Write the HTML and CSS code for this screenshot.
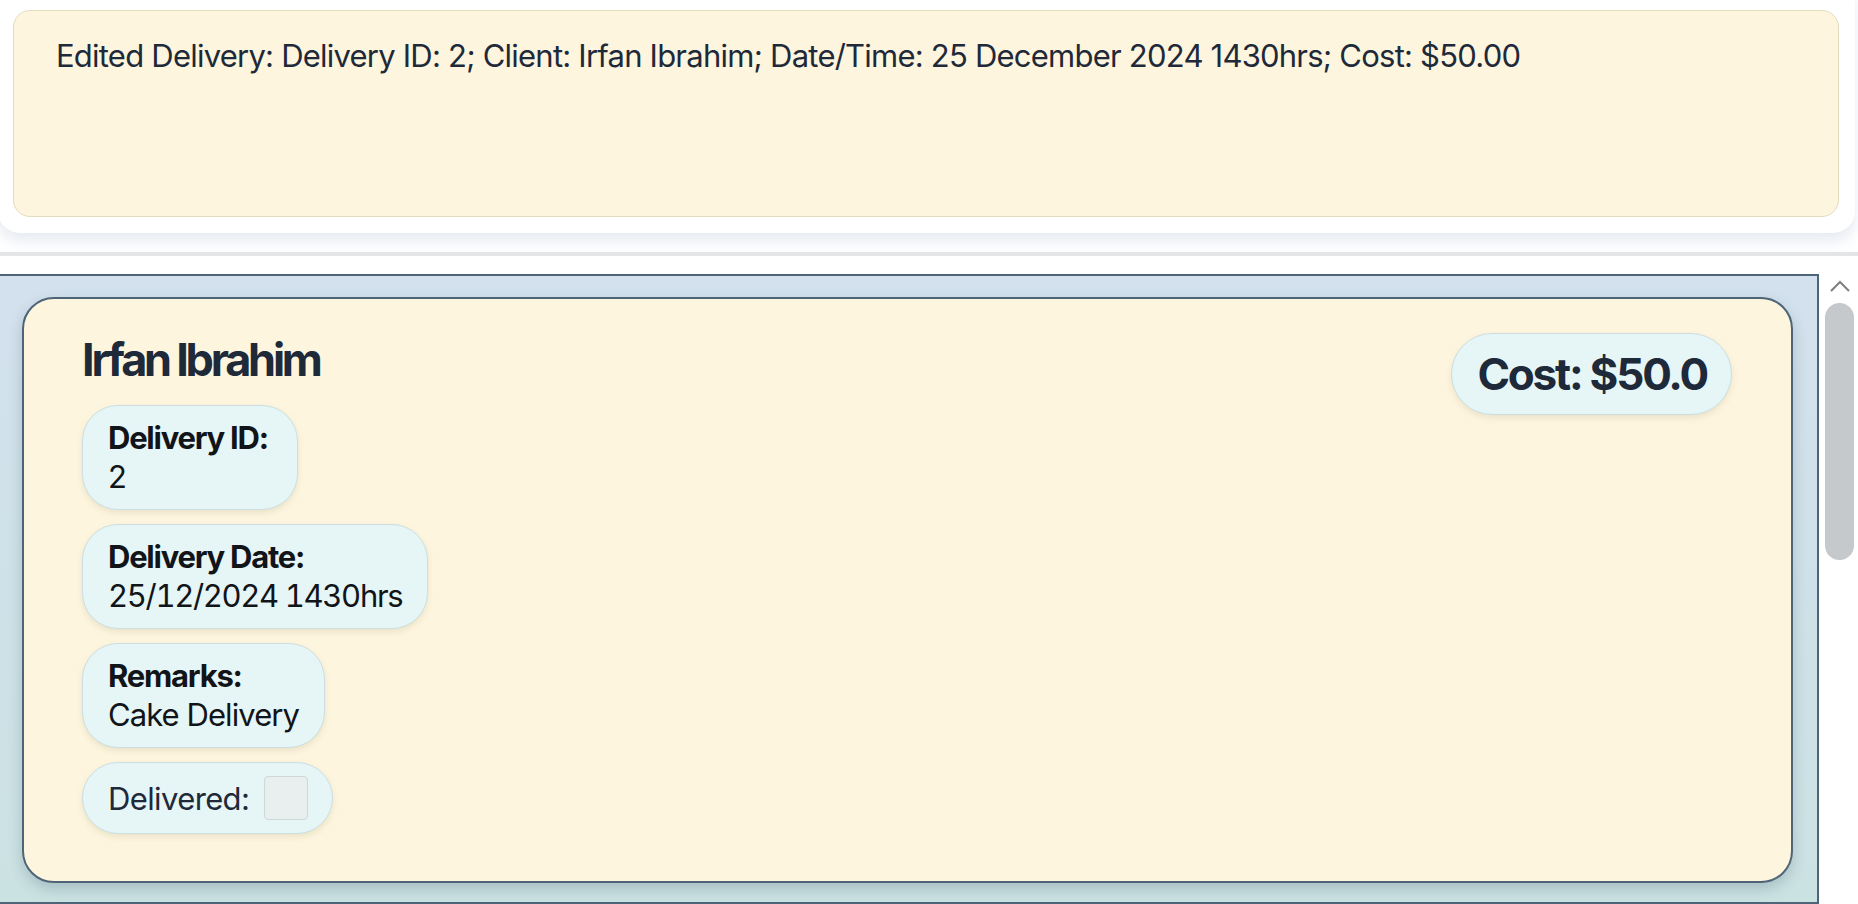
FILE: index.html
```html
<!DOCTYPE html>
<html>
<head>
<meta charset="utf-8">
<link rel="stylesheet" href="styles.css">
</head>
<body>
<div class="app">
  <div class="result-panel">
    <div class="result-box">Edited Delivery: Delivery ID: 2; Client: Irfan Ibrahim; Date/Time: 25 December 2024 1430hrs; Cost: $50.00</div>
  </div>
  <div class="divider"></div>
  <div class="list-area">
    <div class="list">
      <div class="card">
        <div class="card-main">
          <div class="name">Irfan Ibrahim</div>
          <div class="pill pill-id">
            <div class="label">Delivery ID:</div>
            <div class="value">2</div>
          </div>
          <div class="pill">
            <div class="label">Delivery Date:</div>
            <div class="value value-date">25/12/2024 1430hrs</div>
          </div>
          <div class="pill">
            <div class="label">Remarks:</div>
            <div class="value">Cake Delivery</div>
          </div>
          <div class="pill pill-check">
            <span class="check-label">Delivered:</span>
            <span class="checkbox"></span>
          </div>
        </div>
        <div class="cost">Cost: $50.0</div>
      </div>
    </div>
    <div class="scrollbar">
      <svg class="arrow" width="22" height="12" viewBox="0 0 22 12"><path d="M2 11 L11 2 L20 11" fill="none" stroke="#7d7f82" stroke-width="2"/></svg>
      <div class="thumb"></div>
    </div>
  </div>
</div>
</body>
</html>
```

FILE: styles.css
```css
html, body {
  margin: 0;
  padding: 0;
  background: #ffffff;
  width: 1858px;
  height: 904px;
  overflow: hidden;
  font-family: "Inter", "Noto Sans", sans-serif;
}

.app {
  display: flex;
  flex-direction: column;
  width: 1858px;
  height: 904px;
}

.result-panel {
  margin-top: -20px;
  margin-left: -2px;
  width: 1857px;
  height: 253px;
  box-sizing: border-box;
  padding: 30px 16px 16px 15px;
  background: #ffffff;
  border-radius: 22px;
  box-shadow: 0 8px 14px rgba(140, 160, 190, 0.22);
  flex: none;
}

.result-box {
  height: 100%;
  box-sizing: border-box;
  background: #fdf5de;
  border: 1.5px solid #e5dbbf;
  border-radius: 17px;
  padding: 25px 42px;
  color: #1e2939;
  font-size: 31px;
  letter-spacing: -0.025em;
  line-height: 40px;
}

.divider {
  flex: none;
  margin-top: 19px;
  height: 4px;
  background: #e3e5e7;
}

.list-area {
  flex: none;
  margin-top: 18px;
  height: 630px;
  display: flex;
}

.list {
  margin-left: -2px;
  width: 1821px;
  height: 630px;
  box-sizing: border-box;
  border: 2px solid #4e6477;
  background: linear-gradient(180deg, #d3e1ee 0%, #cfe1e8 50%, #cbe2e3 100%);
  padding: 21px 24px 19px 22px;
  display: flex;
}

.card {
  flex: 1;
  display: flex;
  justify-content: space-between;
  align-items: flex-start;
  background: #fdf5de;
  border: 2px solid #4e6477;
  border-radius: 32px;
  box-shadow: 0 6px 14px rgba(40, 70, 80, 0.22);
  padding: 34px 59px 0 58px;
}

.card-main {
  display: flex;
  flex-direction: column;
  align-items: flex-start;
  gap: 14px;
}

.name {
  font-weight: 700;
  font-size: 45px;
  line-height: 54px;
  letter-spacing: -0.072em;
  color: #1e2939;
  margin-bottom: 4px;
}

.pill {
  background: #e6f5f5;
  border: 1.5px solid #cbdfe2;
  border-radius: 36px;
  box-shadow: 0 3px 6px rgba(150, 150, 110, 0.18);
  padding: 12px 25px 13px 25px;
  color: #111418;
  font-size: 31px;
  line-height: 39px;
}

.pill-id {
  padding-right: 29px;
}

.label {
  font-weight: 700;
  letter-spacing: -0.04em;
}

.value {
  letter-spacing: -0.03em;
}

.value-date {
  font-variant-numeric: tabular-nums;
  letter-spacing: -0.043em;
}

.pill-check {
  display: flex;
  align-items: center;
  gap: 15px;
  padding: 13px 24px 13px 25px;
}

.check-label {
  color: #1e2939;
  letter-spacing: -0.02em;
}

.checkbox {
  width: 42px;
  height: 42px;
  background: #e9efef;
  border: 1px solid #cfd8d8;
  border-radius: 4px;
}

.cost {
  background: #e6f5f5;
  border: 1.5px solid #cbdfe2;
  border-radius: 42px;
  box-shadow: 0 3px 6px rgba(150, 150, 110, 0.18);
  padding: 14px 24px 14px 25px;
  font-weight: 700;
  font-size: 44px;
  line-height: 52px;
  letter-spacing: -0.05em;
  color: #1e2939;
}

.scrollbar {
  flex: 1;
  display: flex;
  flex-direction: column;
  align-items: center;
  padding-top: 6px;
}

.arrow {
  display: block;
  margin-left: 3px;
}

.thumb {
  margin-top: 11px;
  margin-left: 1px;
  width: 29px;
  height: 257px;
  background: #c6c9cc;
  border-radius: 15px;
}
```
